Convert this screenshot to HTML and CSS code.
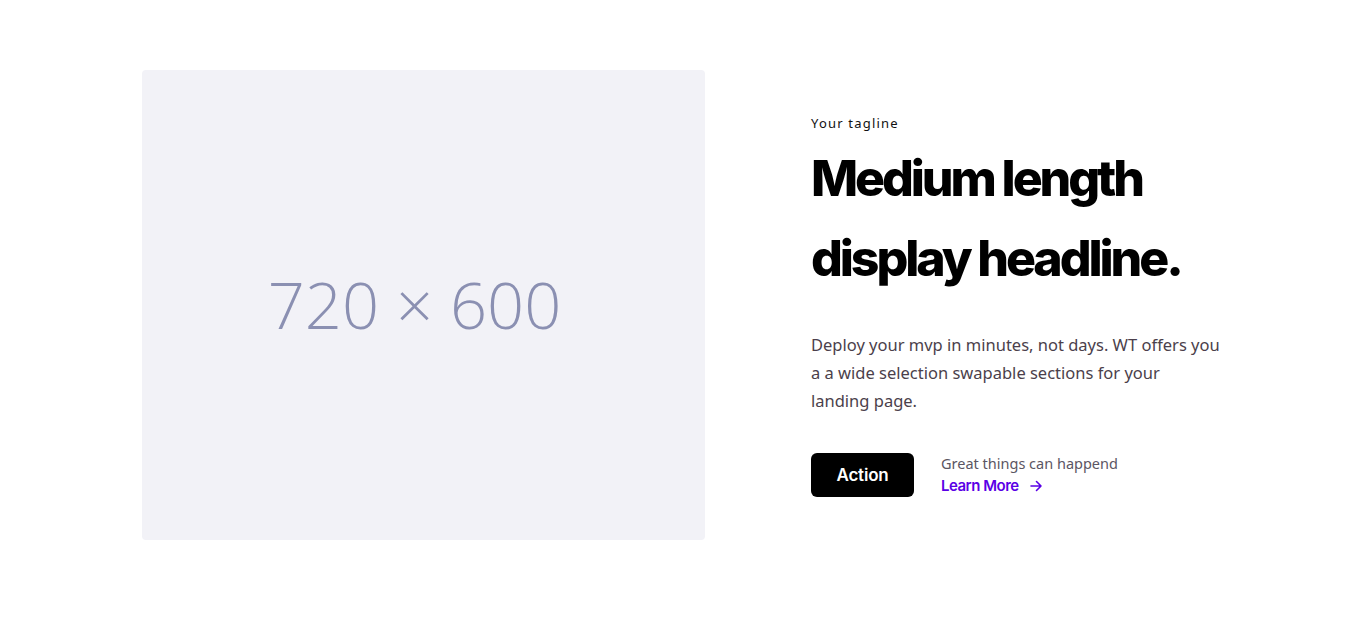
FILE: index.html
```html
<!DOCTYPE html>
<html lang="en">
<head>
<meta charset="utf-8">
<title>Hero</title>
<link rel="stylesheet" href="styles.css">
</head>
<body>
<section class="hero">
  <div class="hero-media">
    <div class="placeholder">720 × 600</div>
  </div>
  <div class="hero-content">
    <p class="tagline">Your tagline</p>
    <h1 class="headline">Medium length display headline.</h1>
    <p class="lead">Deploy your mvp in minutes, not days. WT offers you a a wide selection swapable sections for your landing page.</p>
    <div class="actions">
      <a class="btn" href="#">Action</a>
      <div class="more">
        <span class="more-note">Great things can happend</span>
        <a class="more-link" href="#">Learn More
          <svg class="arrow" width="14" height="14" viewBox="0 0 14 14" fill="none" stroke="currentColor" stroke-width="1.6" stroke-linecap="round" stroke-linejoin="round"><path d="M2 7h10M7.5 2.5 12 7l-4.5 4.5"/></svg>
        </a>
      </div>
    </div>
  </div>
</section>
</body>
</html>
```
FILE: styles.css
```css
* { box-sizing: border-box; }
html, body { margin: 0; padding: 0; background: #fff; }
body { font-family: "Noto Sans", "Liberation Sans", sans-serif; color: #000; }

.hero {
  display: flex;
  align-items: center;
  gap: 106px;
  padding: 70px 0 79px 142px;
}

.hero-media { flex: 0 0 563px; }
.placeholder {
  width: 563px;
  height: 470px;
  background: #f2f2f7;
  border-radius: 4px;
  display: flex;
  align-items: center;
  justify-content: center;
  font-family: "Open Sans", sans-serif;
  font-weight: 300;
  font-size: 65px;
  color: #8b90b2;
  padding: 0 18px 2px 0;
}

.hero-content { width: 410px; }

.tagline {
  margin: 0 0 6px;
  font-size: 13px;
  letter-spacing: 1.2px;
  line-height: 18px;
  color: #111;
}

.headline {
  margin: 0;
  font-family: Inter, sans-serif;
  font-weight: 800;
  font-size: 50px;
  line-height: 80px;
  letter-spacing: -0.062em;
  color: #000;
}

.lead {
  margin: 33px 0 0;
  font-size: 16.5px;
  line-height: 28px;
  color: #4b3f4b;
}

.actions {
  display: flex;
  align-items: center;
  gap: 27px;
  margin-top: 38px;
}

.btn {
  display: inline-flex;
  align-items: center;
  justify-content: center;
  width: 103px;
  height: 44px;
  background: #000;
  color: #fff;
  border-radius: 6px;
  font-family: Inter, sans-serif;
  font-weight: 600;
  font-size: 17px;
  text-decoration: none;
  letter-spacing: -0.2px;
}

.more { display: flex; flex-direction: column; gap: 3px; }
.more-note { font-size: 14.5px; line-height: 20px; color: #5b5663; }
.more-link {
  display: inline-flex;
  align-items: center;
  gap: 10px;
  font-family: Inter, sans-serif;
  font-weight: 600;
  font-size: 15px;
  line-height: 20px;
  color: #5a00e6;
  text-decoration: none;
  letter-spacing: -0.5px;
}
.arrow { display: block; }
```
